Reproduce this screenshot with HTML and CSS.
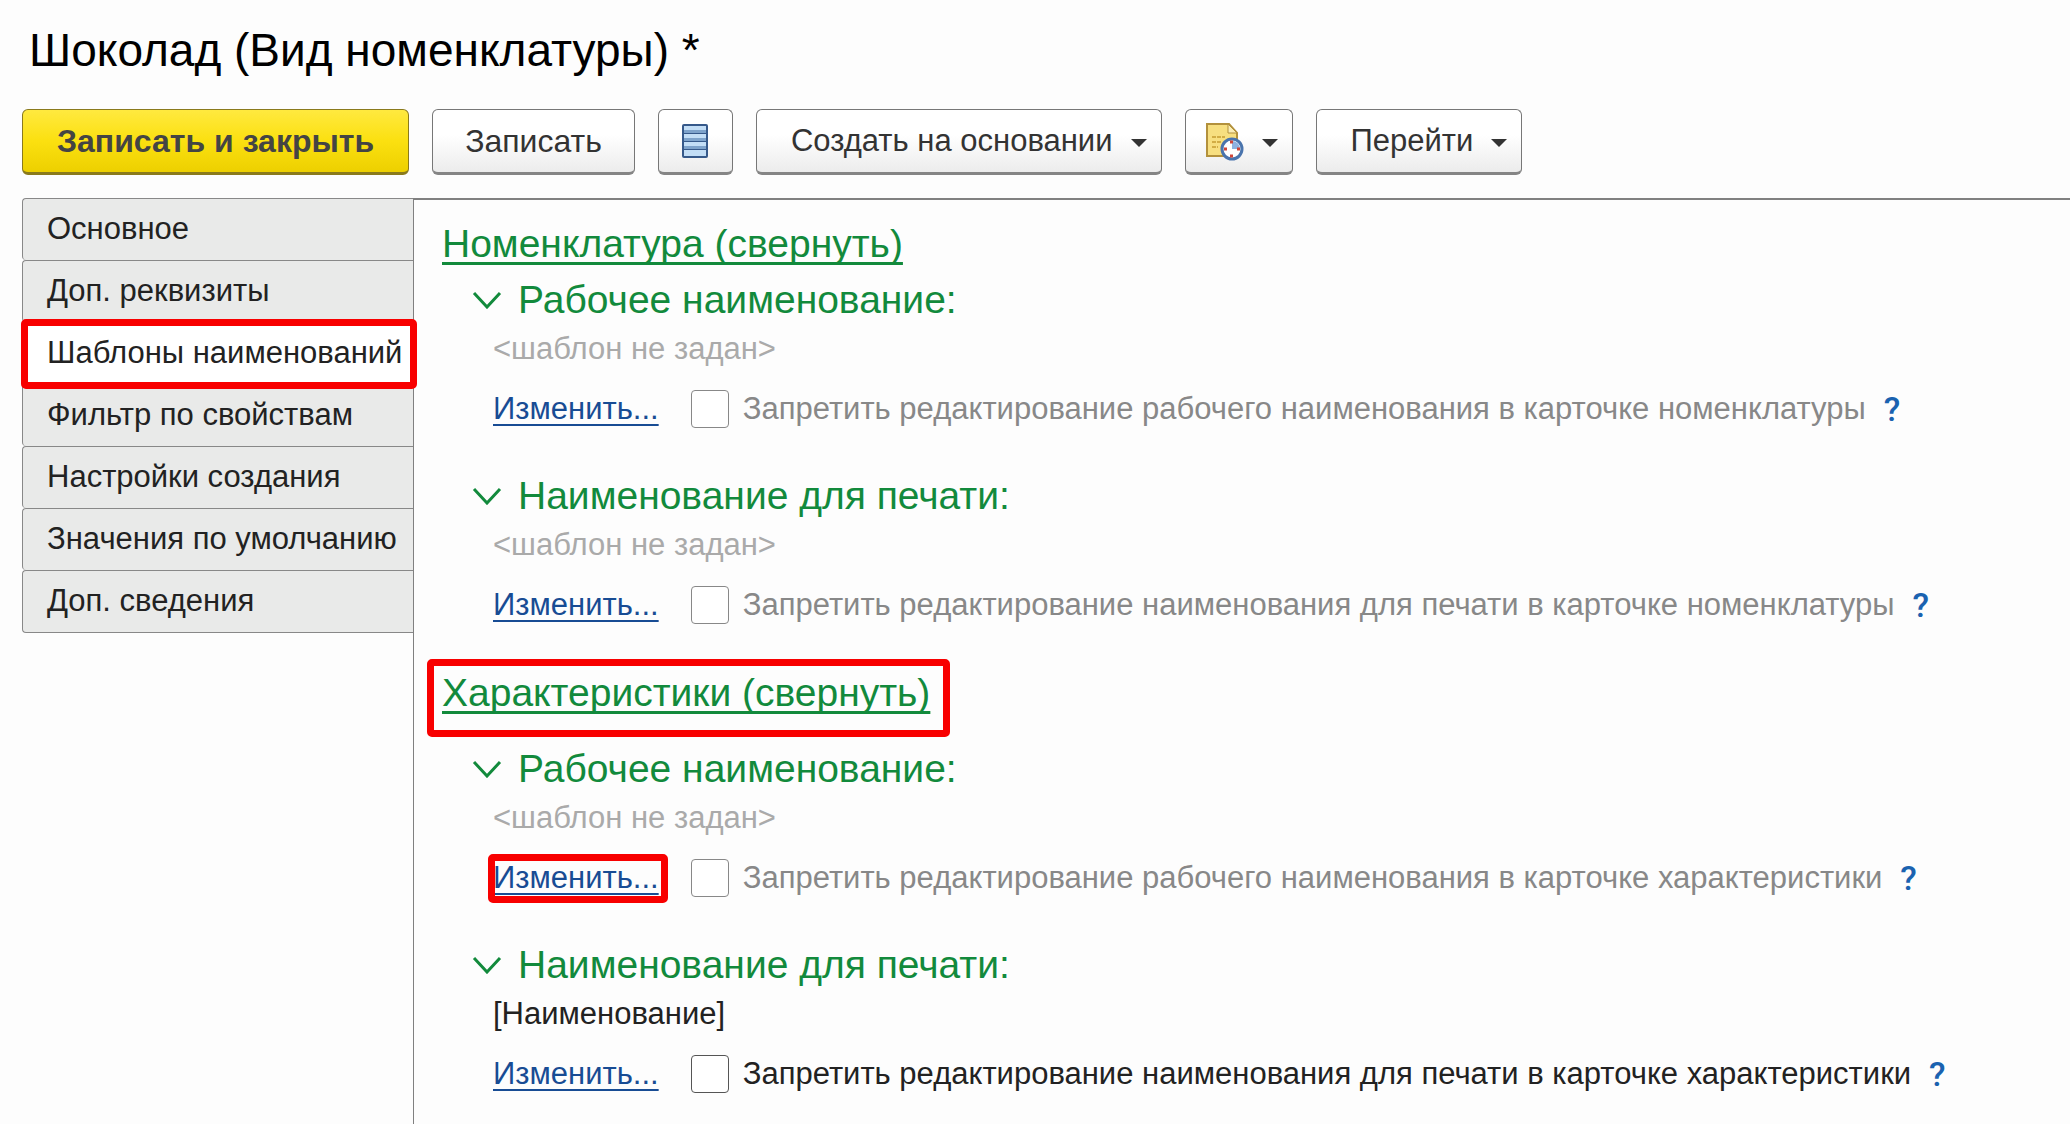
FILE: index.html
```html
<!DOCTYPE html>
<html lang="ru">
<head>
    <meta charset="UTF-8">
    <meta name="viewport" content="width=device-width, initial-scale=1.0">
    <title>Шоколад (Вид номенклатуры)</title>
    <link rel="stylesheet" href="styles.css">
</head>
<body>
    <h1>Шоколад (Вид номенклатуры) *</h1>

    <div class="toolbar">
        <button type="button" class="btn btn-primary">Записать и закрыть</button>
        <button type="button" class="btn">Записать</button>
        <button type="button" class="btn btn-icon" aria-label="Список">
            <svg width="28" height="36" viewBox="0 0 28 36">
                <rect x="1" y="1" width="26" height="34" rx="2" fill="#36598a"/>
                <path d="M3 3h22v7H3zM3 11h22v7H3zM3 19h22v7H3zM3 27h22v6H3z" fill="#c3def6"/>
                <path d="M3 7h22v3H3zM3 15h22v3H3zM3 23h22v3H3z" fill="#7ea3cb"/>
            </svg>
        </button>
        <button type="button" class="btn btn-menu">Создать на основании
            <svg class="caret" width="16" height="8" viewBox="0 0 16 8"><path d="M0 0h16L8 8z"/></svg>
        </button>
        <button type="button" class="btn btn-doc" aria-label="Отложенные">
            <svg width="38" height="40" viewBox="0 0 38 40">
                <path d="M1 3h22l8 9v23H1z" fill="#f7df80" stroke="#b3913c" stroke-width="2"/>
                <path d="M22 3v9h9z" fill="#fbeeb5" stroke="#b3913c" stroke-width="1"/>
                <path d="M6 16h13M6 21h9M6 26h6" stroke="#d2ad45" stroke-width="2" stroke-dasharray="4 1"/>
                <circle cx="26" cy="28" r="10" fill="#fff" stroke="#4a74ad" stroke-width="3"/>
                <path d="M26 28v-8a8 8 0 0 1 8 8z" fill="#8fb2e0"/>
                <path d="M24 21h3M24 35h3M18 28h3M31 28h3" stroke="#d04438" stroke-width="3"/>
            </svg>
            <svg class="caret" width="16" height="8" viewBox="0 0 16 8"><path d="M0 0h16L8 8z"/></svg>
        </button>
        <button type="button" class="btn btn-menu">Перейти
            <svg class="caret" width="16" height="8" viewBox="0 0 16 8"><path d="M0 0h16L8 8z"/></svg>
        </button>
    </div>

    <div class="content">
        <nav class="tabs">
            <a href="#">Основное</a>
            <a href="#">Доп. реквизиты</a>
            <a href="#" class="active marked">Шаблоны наименований</a>
            <a href="#">Фильтр по свойствам</a>
            <a href="#">Настройки создания</a>
            <a href="#">Значения по умолчанию</a>
            <a href="#">Доп. сведения</a>
        </nav>

        <main class="panel">
            <section>
                <h2><a href="#">Номенклатура (свернуть)</a></h2>

                <div class="template">
                    <h3><svg class="chevron" width="30" height="18" viewBox="0 0 30 18"><path d="M2 2l13 14L28 2"/></svg>Рабочее наименование:</h3>
                    <p class="empty">&lt;шаблон не задан&gt;</p>
                    <div class="row">
                        <a href="#" class="edit">Изменить...</a>
                        <input type="checkbox" id="lockItemWork" disabled>
                        <label for="lockItemWork">Запретить редактирование рабочего наименования в карточке номенклатуры</label>
                        <button type="button" class="help">?</button>
                    </div>
                </div>

                <div class="template">
                    <h3><svg class="chevron" width="30" height="18" viewBox="0 0 30 18"><path d="M2 2l13 14L28 2"/></svg>Наименование для печати:</h3>
                    <p class="empty">&lt;шаблон не задан&gt;</p>
                    <div class="row">
                        <a href="#" class="edit">Изменить...</a>
                        <input type="checkbox" id="lockItemPrint" disabled>
                        <label for="lockItemPrint">Запретить редактирование наименования для печати в карточке номенклатуры</label>
                        <button type="button" class="help">?</button>
                    </div>
                </div>
            </section>

            <section>
                <h2 class="spaced"><a href="#" class="marked">Характеристики (свернуть)</a></h2>

                <div class="template">
                    <h3><svg class="chevron" width="30" height="18" viewBox="0 0 30 18"><path d="M2 2l13 14L28 2"/></svg>Рабочее наименование:</h3>
                    <p class="empty">&lt;шаблон не задан&gt;</p>
                    <div class="row">
                        <a href="#" class="edit marked">Изменить...</a>
                        <input type="checkbox" id="lockCharWork" disabled>
                        <label for="lockCharWork">Запретить редактирование рабочего наименования в карточке характеристики</label>
                        <button type="button" class="help">?</button>
                    </div>
                </div>

                <div class="template">
                    <h3><svg class="chevron" width="30" height="18" viewBox="0 0 30 18"><path d="M2 2l13 14L28 2"/></svg>Наименование для печати:</h3>
                    <p>[Наименование]</p>
                    <div class="row">
                        <a href="#" class="edit">Изменить...</a>
                        <input type="checkbox" id="lockCharPrint">
                        <label for="lockCharPrint">Запретить редактирование наименования для печати в карточке характеристики</label>
                        <button type="button" class="help">?</button>
                    </div>
                </div>
            </section>
        </main>
    </div>
</body>
</html>
```
FILE: styles.css
```css
* {
    box-sizing: border-box;
}
body {
    display: flex;
    flex-direction: column;
    min-height: 100vh;
    margin: 0;
    padding: 22px 0 0 22px;
    background-color: #fdfdfd;
    color: #222;
    font-family: "Liberation Sans", Arial, sans-serif;
    font-size: 31px;
    line-height: 40px;
}
h1, h2, h3, p {
    margin: 0;
    font-weight: normal;
}
h1 {
    padding-left: 7px;
    color: #000;
    font-size: 46px;
    line-height: 56px;
}

/* toolbar */
.toolbar {
    display: flex;
    gap: 23px;
    margin-top: 31px;
}
.btn {
    display: flex;
    align-items: center;
    justify-content: center;
    height: 66px;
    padding: 0 32px;
    border: 1px solid #777;
    border-bottom: 3px solid #858585;
    border-radius: 6px;
    background: linear-gradient(#fff 40%, #ececec);
    color: #333;
    font-family: inherit;
    font-size: 32px;
    white-space: nowrap;
    cursor: pointer;
}
.btn-primary {
    padding: 0 34px;
    border-color: #8a7a1c;
    background: linear-gradient(#ffe93f, #fbe010 50%, #edd000);
    color: #444;
    font-weight: bold;
}
.btn-icon {
    width: 75px;
    padding: 0;
}
.btn-menu {
    gap: 18px;
    padding: 0 14px 0 34px;
    font-size: 31px;
}
.btn-doc {
    gap: 18px;
    padding: 0 14px 0 20px;
}
.caret {
    fill: #333;
    margin-top: 4px;
}

/* tabs and panel */
.content {
    display: flex;
    flex: 1;
    margin-top: 23px;
}
.tabs {
    width: 391px;
    flex-shrink: 0;
}
.tabs a {
    display: block;
    height: 62px;
    padding: 10px 0 0 24px;
    border: 1px solid #888;
    border-width: 1px 0 0 1px;
    border-radius: 4px 0 0 4px;
    background-color: #e9eae9;
    color: #222;
    text-decoration: none;
    white-space: nowrap;
}
.tabs a:last-child {
    height: 63px;
    border-bottom-width: 1px;
}
.tabs a.active {
    background-color: #fff;
}
.panel {
    flex: 1;
    padding: 19px 0 0 28px;
    border-top: 2px solid #808080;
    border-left: 1px solid #808080;
}
section + section {
    padding-top: 1px;
}
h2 {
    margin-bottom: 6px;
    font-size: 39px;
    line-height: 50px;
}
h2 a {
    color: #128a3c;
    text-decoration-thickness: 3px;
    text-underline-offset: 5px;
    text-decoration-skip-ink: none;
}
.spaced {
    margin-bottom: 26px;
}
.template {
    margin-bottom: 42px;
    padding-left: 51px;
}
section:last-child .template:last-child {
    margin-bottom: 0;
}
h3 {
    display: flex;
    align-items: center;
    gap: 16px;
    margin: 0 0 4px -21px;
    color: #128a3c;
    font-size: 39px;
    line-height: 50px;
}
.chevron {
    fill: none;
    stroke: #128a3c;
    stroke-width: 3;
}
.empty {
    color: #aaa;
}
.row {
    display: flex;
    align-items: center;
    margin-top: 20px;
    white-space: nowrap;
}
.edit {
    color: #184c94;
    text-decoration-thickness: 2px;
    text-underline-offset: 5px;
    text-decoration-skip-ink: none;
}
input[type="checkbox"] {
    appearance: none;
    width: 38px;
    height: 38px;
    margin: 0 14px 0 32px;
    border: 1px solid #555;
    border-radius: 4px;
    background-color: #fff;
}
input:disabled {
    border-color: #888;
}
input:disabled + label {
    color: #888;
}
.help {
    margin-left: 18px;
    padding: 0;
    border: none;
    background: none;
    color: #1a62b0;
    font-family: Roboto, sans-serif;
    font-size: 34px;
    font-weight: 500;
    line-height: 40px;
    cursor: pointer;
}

/* red frame round an item */
.marked {
    position: relative;
}
.marked::after {
    content: "";
    position: absolute;
    inset: -4px -4px -5px -2px;
    border: 7px solid #f80000;
    border-radius: 5px;
}
h2 .marked::after {
    inset: -12px -20px -23px -15px;
}
.edit.marked::after {
    inset: -4px -9px -5px -5px;
}
```
